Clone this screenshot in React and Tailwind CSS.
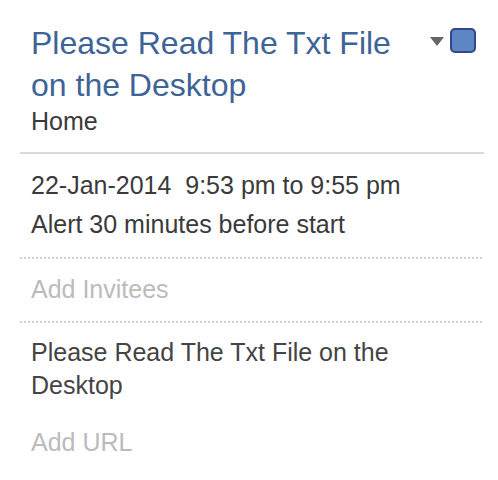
const Dotted = () => (
  <div className="h-[2px] bg-[linear-gradient(to_right,#d2d2d2_50%,transparent_50%)] bg-[length:4px_2px]" />
);

export default function App() {
  return (
    <div
      className="min-h-[480px] w-[498px] bg-white"
      style={{ fontFamily: '"Liberation Sans", Arial, Helvetica, sans-serif' }}
    >
      <div className="pl-[20px] pr-[14px]">
        <div className="flex items-start pt-[22px] pl-[11px] pr-[8px]">
          <div className="flex-1 text-[32px] leading-[42px] text-[#3e6497]">
            Please Read The Txt File on the Desktop
          </div>
          <div className="flex items-start gap-[6px] pt-[6px]">
            <svg width="14" height="9" viewBox="0 0 14 9" className="mt-[9px]">
              <path d="M0 0 L14 0 L7 9 Z" fill="#666" />
            </svg>
            <div className="h-[25px] w-[26px] rounded-[5px] border-2 border-[#34478c] bg-[#5d87c3]" />
          </div>
        </div>
        <div className="pl-[11px] text-[25px] leading-[30px] text-[#3a3a3a]">Home</div>

        <div className="mt-[16px] h-[2px] bg-[#d9d9d9]" />

        <div className="pl-[11px] pt-[16px] text-[25px] leading-[30px] text-[#3a3a3a]">
          <div className="whitespace-pre">22-Jan-2014  9:53 pm to 9:55 pm</div>
          <div className="mt-[9px]">Alert 30 minutes before start</div>
        </div>

        <div className="mt-[18px]">
          <Dotted />
        </div>

        <div className="pl-[11px] pt-[15px] pb-[17px] text-[25px] leading-[30px] text-[#bbbbbb]">
          Add Invitees
        </div>

        <Dotted />

        <div className="pl-[11px] pr-[20px] pt-[13px] text-[25px] leading-[33px] text-[#444444]">
          Please Read The Txt File on the Desktop
        </div>
        <div className="pl-[11px] pt-[25px] text-[25px] leading-[30px] text-[#bbbbbb]">Add URL</div>
      </div>
    </div>
  );
}
